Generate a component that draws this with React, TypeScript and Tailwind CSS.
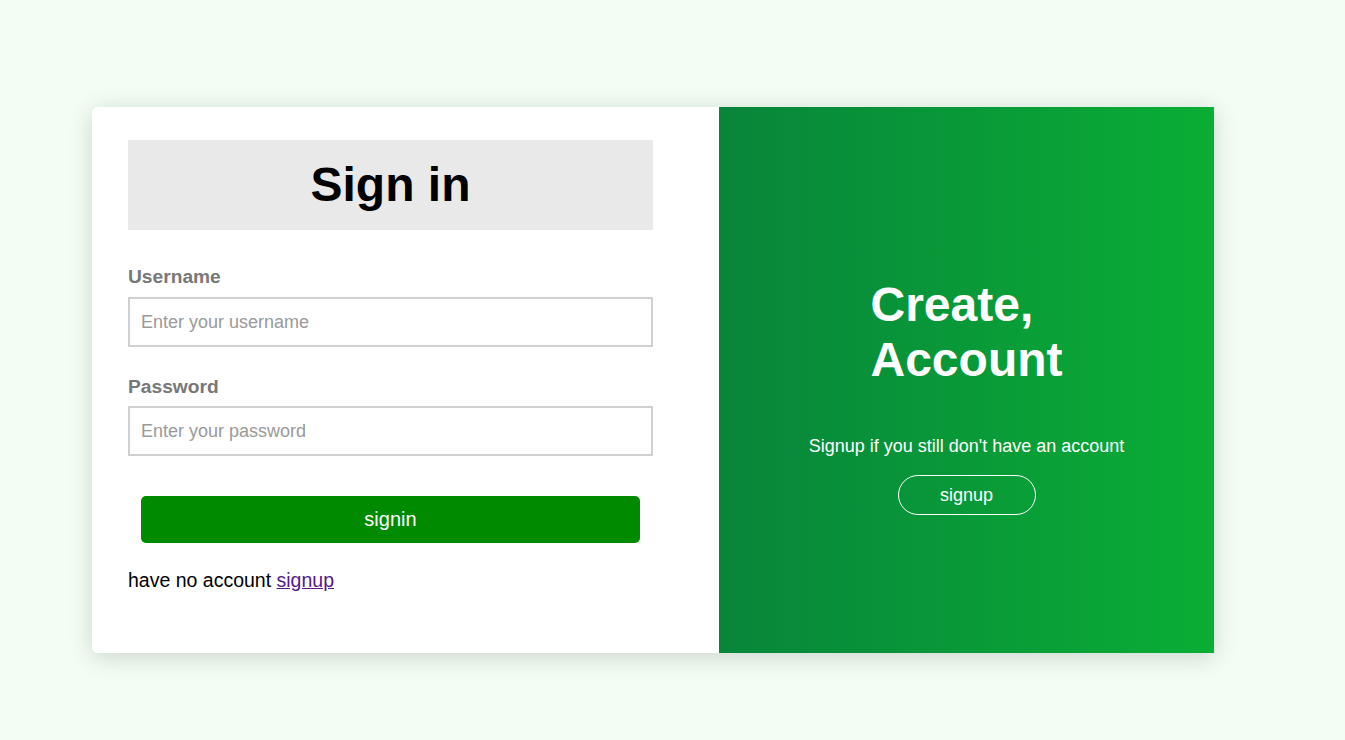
import React, { useState } from 'react';

const App = () => {
  const [username, setUsername] = useState('');
  const [password, setPassword] = useState('');

  return (
    <div
      className="min-h-screen w-full bg-[#f2fdf4] pt-[107px] pl-[92px] leading-[normal]"
      style={{ fontFamily: '"Liberation Sans", Arial, sans-serif' }}
    >
      <div className="flex w-[1122px] h-[546px] rounded-l-[6px] shadow-[0_4px_24px_rgba(0,0,0,0.16)]">
        {/* sign in form */}
        <div className="w-[627px] bg-white rounded-l-[6px] pt-[33px] px-[36px] flex flex-col">
          <div className="h-[90px] w-[525px] bg-[#e9e9e9] flex items-center justify-center">
            <h1 className="text-[48px] font-bold text-black leading-none">Sign in</h1>
          </div>

          <label className="mt-[36px] text-[19.2px] font-bold text-[#787878]">Username</label>
          <input
            className="mt-[9px] h-[50px] w-[525px] border-2 border-[#d0d0d0] pl-[11px] text-[18px] text-black outline-none placeholder:text-[#9a9a9a]"
            placeholder="Enter your username"
            value={username}
            onChange={(e) => setUsername(e.target.value)}
          />

          <label className="mt-[29px] text-[19.2px] font-bold text-[#787878]">Password</label>
          <input
            type="password"
            className="mt-[8px] h-[50px] w-[525px] border-2 border-[#d0d0d0] pl-[11px] text-[18px] text-black outline-none placeholder:text-[#9a9a9a]"
            placeholder="Enter your password"
            value={password}
            onChange={(e) => setPassword(e.target.value)}
          />

          <button className="mt-[40px] mx-[13px] h-[47px] w-[499px] rounded-[5px] bg-[#008a00] text-[20px] text-white">
            signin
          </button>

          <p className="mt-[26px] text-[19.5px] text-black">
            have no account{' '}
            <a href="#" className="text-[#551a8b] underline">
              signup
            </a>
          </p>
        </div>

        {/* create account panel */}
        <div className="w-[495px] bg-gradient-to-r from-[#08853a] to-[#0aae34] flex flex-col items-center pt-[170px] text-white">
          <h2 className="w-min text-[48px] font-bold text-left">Create, Account</h2>
          <p className="mt-[49px] text-[18px]">Signup if you still don't have an account</p>
          <button className="mt-[18px] h-[40px] w-[138px] rounded-full border border-white text-[18px] text-white">
            signup
          </button>
        </div>
      </div>
    </div>
  );
};

export default App;
